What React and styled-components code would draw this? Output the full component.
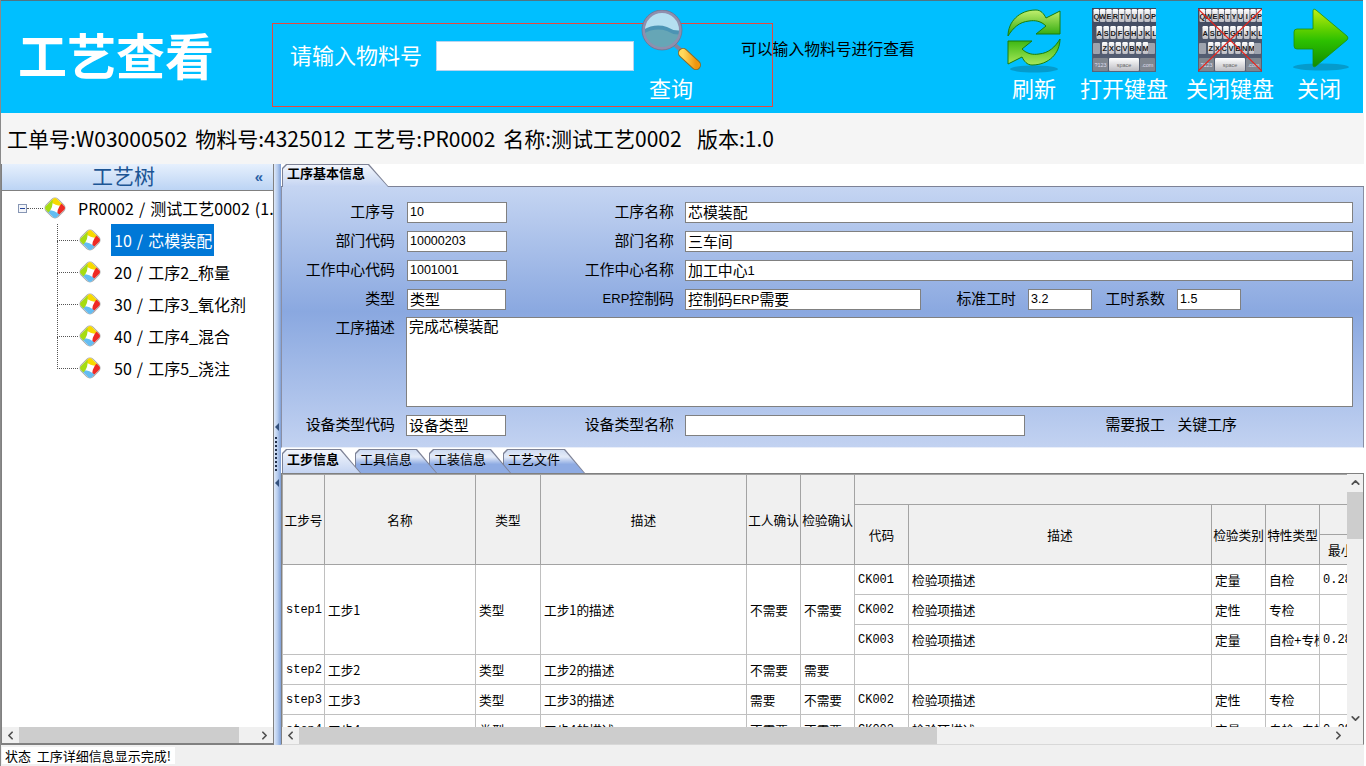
import React from "react";
import styled, { createGlobalStyle } from "styled-components";
import { ChevronLeft, ChevronRight, ChevronUp, ChevronDown } from "lucide-react";

const Global = createGlobalStyle`
  html, body { margin: 0; padding: 0; background: #fff; }
  body { font-family: "Noto Sans CJK SC", "Liberation Sans", sans-serif; color: #000; }
  * { box-sizing: border-box; }
`;

const CJK = `"Noto Sans CJK SC", "Liberation Sans", sans-serif`;
const MIXED = `"Liberation Sans", "Noto Sans CJK SC", sans-serif`;
const MONO = `"Liberation Mono", "Noto Sans CJK SC", monospace`;

// Styling Start
const Page = styled.div`
  width: 1366px;
  height: 766px;
  overflow: hidden;
  display: flex;
  flex-direction: column;
  padding-right: 2px;
  border-left: 1px solid #8a8a8a;
`;

const Header = styled.header`
  position: relative;
  flex: 0 0 113px;
  display: flex;
  align-items: flex-start;
  background: #00bfff;
  border-top: 1px solid #4f7484;
  margin-right: 1px;
`;

const AppTitle = styled.h1`
  width: 271px;
  height: 105px;
  margin: 0;
  padding-left: 17px;
  display: flex;
  align-items: center;
  font: 700 49px/1 ${CJK};
  color: #fff;
`;

const SearchBox = styled.div`
  position: relative;
  width: 501px;
  height: 84px;
  margin-top: 22px;
  padding: 17px 0 0 17px;
  display: flex;
  align-items: flex-start;
  gap: 14px;
  border: 1px solid #e8483f;
`;

const SearchLabel = styled.span`
  margin-top: -2px;
  font: 400 22px/30px ${CJK};
  color: #fff;
`;

const SearchInput = styled.div`
  width: 198px;
  height: 30px;
  background: #fff;
  border: 1px solid #b8d4f0;
`;

const QueryButton = styled.div`
  position: absolute;
  left: 368px;
  top: -14px;
  display: flex;
  flex-direction: column;
  align-items: center;
  width: 60px;
`;

const ButtonText = styled.span`
  margin-top: ${(p) => p.$mt || 0}px;
  font: 400 22px/30px ${CJK};
  color: #fff;
  white-space: nowrap;
`;

const Hint = styled.span`
  position: absolute;
  left: 468px;
  top: 13px;
  font: 400 15.8px/24px ${CJK};
  white-space: nowrap;
`;

const Tools = styled.div`
  margin-left: auto;
  margin-right: 22px;
  margin-top: 7px;
  display: flex;
`;

const Tool = styled.div`
  display: flex;
  flex-direction: column;
  align-items: center;
  margin-left: ${(p) => p.$ml || 0}px;
`;

const ToolIcon = styled.div`
  width: 0;
  height: 64px;
  display: flex;
  justify-content: center;
  align-items: flex-start;
`;

const InfoBar = styled.div`
  flex: 0 0 51px;
  display: flex;
  align-items: center;
  padding-left: 6px;
  background: #f5f5f5;
  font: 400 21px/1 ${CJK};
  word-spacing: 3px;
  white-space: pre;
`;

const Main = styled.div`
  flex: 0 0 581px;
  display: flex;
  min-height: 0;
`;

const LeftPanel = styled.aside`
  width: 273px;
  display: flex;
  flex-direction: column;
  border: 1px solid #808080;
  border-top: 0;
  border-bottom-width: 2px;
  background: #fff;
`;

const PanelTitle = styled.div`
  position: relative;
  flex: 0 0 27px;
  display: flex;
  align-items: center;
  justify-content: center;
  padding: 0 28px 4px 0;
  background: linear-gradient(#e6f0fd, #bcd4f4);
  border-bottom: 1px solid #808080;
  color: #1c5594;
  font: 400 21px/1 ${CJK};
`;

const Collapse = styled.span`
  position: absolute;
  right: 10px;
  top: 3px;
  font: 700 15px/20px ${MIXED};
  color: #2a5fa5;
`;

const Tree = styled.div`
  flex: 1;
  min-height: 0;
  padding-top: 1px;
  overflow: hidden;
  font: 400 16px/1 ${CJK};
  word-spacing: 1.5px;
`;

const RootRow = styled.div`
  height: 32px;
  display: flex;
  align-items: center;
  padding-left: 16px;
  white-space: nowrap;
`;

const Toggle = styled.span`
  flex: none;
  width: 9px;
  height: 9px;
  display: flex;
  align-items: center;
  justify-content: center;
  border: 1px solid #8796b4;
  background: #f4f6fa;
  &::before {
    content: "";
    width: 5px;
    height: 1px;
    background: #24459a;
  }
`;

const HLine = styled.span`
  flex: none;
  width: 16px;
  border-top: 1px dotted #555;
`;

const ChildRow = styled.div`
  height: 32px;
  display: flex;
  align-items: center;
  padding-left: 55px;
  white-space: nowrap;
`;

const Connector = styled.span`
  flex: none;
  width: 21px;
  height: 32px;
  &::before {
    content: "";
    display: block;
    height: 16px;
    border-left: 1px dotted #555;
    border-bottom: 1px dotted #555;
  }
  &::after {
    content: "";
    display: block;
    height: 16px;
    border-left: ${(p) => (p.$last ? "0" : "1px dotted #555")};
  }
`;

const NodeText = styled.span`
  margin-left: ${(p) => p.$ml}px;
  height: 32px;
  padding: 0 2px 0 3px;
  display: flex;
  align-items: center;
  background: ${(p) => (p.$selected ? "#0078d7" : "transparent")};
  color: ${(p) => (p.$selected ? "#fff" : "#000")};
`;

const HBarWrap = styled.div`
  flex: 0 0 ${(p) => p.$h}px;
  display: flex;
  align-items: stretch;
  background: #f0f0f0;
  padding-right: ${(p) => p.$reserve || 0}px;
`;

const BarArrow = styled.span`
  flex: 0 0 ${(p) => p.$size || 17}px;
  display: flex;
  align-items: center;
  justify-content: center;
  color: #505050;
`;

const BarTrack = styled.span`
  flex: 1;
  display: flex;
  flex-direction: ${(p) => (p.$vertical ? "column" : "row")};
`;

const BarThumb = styled.span`
  flex: 0 0 ${(p) => p.$size}px;
  margin-top: ${(p) => (p.$vertical ? p.$offset || 0 : 0)}px;
  margin-left: ${(p) => (p.$vertical ? 0 : p.$offset || 0)}px;
  background: #cdcdcd;
`;

const Splitter = styled.div`
  width: 7px;
  display: flex;
  flex-direction: column;
  align-items: flex-start;
  justify-content: center;
  gap: 6px;
  padding-left: 1px;
  background: linear-gradient(90deg, #dfe9f8, #b6ccee 50%, #7f9fd6);
`;

const Triangle = styled.span`
  width: 0;
  height: 0;
  border: 4px solid transparent;
  border-left: 0;
  border-right: 4px solid #33507c;
`;

const Dots = styled.span`
  width: 2px;
  height: 36px;
  background: repeating-linear-gradient(#1f2f4a 0 2px, transparent 2px 4px);
`;

const RightPanel = styled.section`
  flex: 1;
  min-width: 0;
  display: flex;
  flex-direction: column;
  background: #fff;
`;

const TabStrip = styled.div`
  flex: 0 0 ${(p) => p.$h}px;
  display: flex;
  align-items: flex-end;
  padding-left: 1px;
  background: #fff;
  border-bottom: ${(p) => (p.$border ? "1px solid #7d8296" : "0")};
`;

const TAB_SHAPE = `polygon(0 4px, 4px 0, calc(100% - 20px) 0, 100% 100%, 0 100%)`;

const TabEdge = styled.div`
  position: relative;
  z-index: ${(p) => p.$z};
  flex: none;
  width: ${(p) => p.$w}px;
  height: ${(p) => p.$h}px;
  margin-left: ${(p) => p.$ml || 0}px;
  margin-bottom: ${(p) => (p.$overlap ? -1 : 0)}px;
  padding: 1px 1px 0;
  background: #7d8296;
  clip-path: ${TAB_SHAPE};
`;

const TabFace = styled.div`
  height: 100%;
  display: flex;
  align-items: center;
  padding-left: 4px;
  padding-bottom: ${(p) => p.$lift}px;
  clip-path: ${TAB_SHAPE};
  background: ${(p) =>
    p.$active
      ? "linear-gradient(#f3f6fc, #c4d4f2)"
      : "linear-gradient(#cfdcf2, #e4ebf8 30%, #8eabe3 62%, #8eabe3)"};
  font: ${(p) => (p.$active ? 700 : 400)} 13px/1 ${CJK};
  white-space: nowrap;
`;

const FormPanel = styled.div`
  flex: 0 0 261px;
  display: flex;
  flex-direction: column;
  padding: 15px 10px 0 0;
  gap: 8px;
  background: linear-gradient(#c5d5f2, #8aa8e0 48%, #c2d2f1);
  border-left: 1px solid #8a8fa4;
  border-right: 1px solid #8a8fa4;
  border-bottom: 1px solid #e9eef9;
  font: 400 14.9px/1 ${CJK};
`;

const FormRow = styled.div`
  height: ${(p) => p.$h || 21}px;
  flex: none;
  display: flex;
  margin-top: ${(p) => p.$mt || 0}px;
`;

const Label = styled.label`
  flex: none;
  width: ${(p) => p.$w}px;
  margin-right: ${(p) => p.$mr}px;
  display: flex;
  align-items: ${(p) => (p.$top ? "flex-start" : "center")};
  justify-content: flex-end;
  padding: ${(p) => (p.$top ? "3px 0 0" : "0 0 2px")};
  white-space: nowrap;
`;

const Field = styled.div`
  flex: ${(p) => (p.$w ? "none" : "1")};
  width: ${(p) => (p.$w ? `${p.$w}px` : "auto")};
  display: flex;
  align-items: ${(p) => (p.$top ? "flex-start" : "center")};
  padding: ${(p) => (p.$top ? "1px 2px" : "0 2px 1px")};
  background: #fff;
  border: 1px solid #808080;
  font-size: ${(p) => (p.$num ? "12.5px" : "14.9px")};
  font-family: ${(p) => (p.$num ? MIXED : CJK)};
  white-space: nowrap;
`;

const Latin = styled.span`
  font: 400 13px/1 ${MIXED};
`;

const TableFrame = styled.div`
  flex: 1;
  min-height: 0;
  display: flex;
  flex-direction: column;
  border: 1px solid #808080;
  border-bottom: 1px solid #d8d8d8;
`;

const TableBody = styled.div`
  flex: 1;
  min-height: 0;
  display: flex;
`;

const Viewport = styled.div`
  flex: 1;
  min-width: 0;
  overflow: hidden;
`;

const VBar = styled.div`
  flex: 0 0 16px;
  display: flex;
  flex-direction: column;
  background: #f0f0f0;
`;

const Grid = styled.table`
  table-layout: fixed;
  width: 1092px;
  border-collapse: collapse;
  font: 400 12.7px/1 ${CJK};
`;

const Th = styled.th`
  height: 30px;
  padding: 1px 0 0;
  background: #f0f0f0;
  border: 1px solid #a3a3a3;
  font-weight: 400;
  text-align: center;
  overflow: hidden;
  white-space: nowrap;
`;

const Td = styled.td`
  height: 30px;
  padding: 1px 3px 0;
  border: 1px solid #c0c0c0;
  font-family: ${(p) => (p.$mono ? MONO : CJK)};
  font-size: ${(p) => (p.$mono ? "12px" : "12.7px")};
  overflow: hidden;
  white-space: nowrap;
`;

const StatusBar = styled.div`
  flex: 1;
  display: flex;
  align-items: flex-start;
  padding: 2px 0 0 1px;
  background: #f0f0f0;
`;

const StatusText = styled.span`
  height: 17px;
  padding: 0 4px 1px 3px;
  display: flex;
  align-items: center;
  background: #fff;
  font: 400 13px/1 ${CJK};
  white-space: pre;
`;

// Icons
const TreeIcon = () => (
  <svg width="24" height="24" viewBox="0 0 24 24" style={{ flex: "none" }}>
    <rect x="3.6" y="3.6" width="16.8" height="16.8" rx="4.5" transform="rotate(45 12 12)" fill="#fff" stroke="#a9a9a9" />
    {[
      ["#f7d900", 0],
      ["#ee2a24", 90],
      ["#63bdf2", 180],
      ["#a6dc12", 270],
    ].map(([color, angle]) => (
      <path key={angle} d="M7.5 5.5 L10 3 Q12 1 14 3 L20.6 9.6 Q13 10.5 7.5 5.5Z" fill={color} transform={`rotate(${angle} 12 12)`} />
    ))}
  </svg>
);

const Magnifier = () => (
  <svg width="60" height="60" viewBox="0 0 60 60" style={{ flex: "none" }}>
    <defs>
      <linearGradient id="handle" x1="0" y1="0" x2="1" y2="0">
        <stop offset="0" stopColor="#ffd95c" />
        <stop offset="1" stopColor="#ef960f" />
      </linearGradient>
      <clipPath id="lens">
        <circle cx="21" cy="20" r="18.5" />
      </clipPath>
    </defs>
    <line x1="34" y1="35" x2="42" y2="42" stroke="#85859d" strokeWidth="4" />
    <line x1="42" y1="43" x2="55" y2="55" stroke="#8a6a28" strokeWidth="10" strokeLinecap="round" />
    <line x1="42" y1="43" x2="55" y2="55" stroke="url(#handle)" strokeWidth="8" strokeLinecap="round" />
    <g clipPath="url(#lens)">
      <rect x="0" y="0" width="42" height="42" fill="#66a6b6" />
      <path d="M0 0 H42 V22 Q34 25 26 19 Q14 15 0 24Z" fill="#b5dff0" />
      <path d="M2 20 Q14 13 26 17 Q34 22 42 20 V24 Q34 26 26 21 Q14 17 2 24Z" fill="#4c94b4" />
    </g>
    <circle cx="21" cy="20" r="18.5" fill="none" stroke="#8f8fae" strokeWidth="3" />
    <circle cx="21" cy="20" r="20" fill="none" stroke="#6f6f88" strokeWidth="0.7" />
  </svg>
);

const Shadow = ({ cy, rx }) => <ellipse cx="30" cy={cy} rx={rx} ry="3.5" fill="#0a6f8e" opacity="0.45" />;

const RefreshIcon = () => (
  <svg width="60" height="66" viewBox="0 0 60 66" style={{ flex: "none" }}>
    <defs>
      <linearGradient id="refreshTop" x1="0" y1="0" x2="0" y2="1">
        <stop offset="0" stopColor="#c2ef6e" />
        <stop offset="1" stopColor="#2ba80b" />
      </linearGradient>
      <linearGradient id="refreshLow" x1="0" y1="1" x2="0" y2="0">
        <stop offset="0" stopColor="#35b40f" />
        <stop offset="1" stopColor="#a9e85a" />
      </linearGradient>
    </defs>
    <Shadow cy="61" rx="24" />
    <path d="M4 28 C4 14 15 2 32 2 C37 2 40 6 42 10 L56 3 L56 26 L32 26 L42 18 C37 13 31 12 25 13 C15 14 9 20 4 28Z" fill="url(#refreshTop)" stroke="#1b7d0c" />
    <path d="M4 28 C4 14 15 2 32 2 C37 2 40 6 42 10 L56 3 L56 26 L32 26 L42 18 C37 13 31 12 25 13 C15 14 9 20 4 28Z" fill="url(#refreshLow)" stroke="#1b7d0c" transform="rotate(180 30 29.5)" />
  </svg>
);

const ROWS = [
  { y: 1, h: 13, w: 5.6, step: 6.35, x: 1.5, keys: "QWERTYUIOP" },
  { y: 18, h: 13, w: 5.6, step: 6.9, x: 4.5, keys: "ASDFGHJKL" },
  { y: 34, h: 12, w: 5.4, step: 6.8, x: 10, keys: "ZXCVBNM" },
];

const KeyboardIcon = ({ crossed, id }) => (
  <svg width="64" height="64" viewBox="0 0 64 64" style={{ flex: "none" }}>
    <defs>
      <linearGradient id={`kbd${id}`} x1="0" y1="0" x2="0" y2="1">
        <stop offset="0" stopColor="#3d465c" />
        <stop offset="1" stopColor="#5a6478" />
      </linearGradient>
      <linearGradient id={`key${id}`} x1="0" y1="0" x2="0" y2="1">
        <stop offset="0" stopColor="#ffffff" />
        <stop offset="1" stopColor="#bcbcc2" />
      </linearGradient>
    </defs>
    <rect width="64" height="64" fill={`url(#kbd${id})`} />
    {ROWS.map((row) =>
      row.keys.split("").map((k, i) => (
        <g key={k}>
          <rect x={row.x + i * row.step} y={row.y} width={row.w} height={row.h} rx="1.2" fill={`url(#key${id})`} />
          <text x={row.x + i * row.step + row.w / 2} y={row.y + row.h - 3.5} fontSize="7.5" fontWeight="700" textAnchor="middle" fill="#1a1a1a" fontFamily="Liberation Sans">{k}</text>
        </g>
      ))
    )}
    <rect x="1" y="35" width="7" height="11" rx="1" fill="#9ea3ae" />
    <rect x="56" y="35" width="7" height="11" rx="1" fill="#9ea3ae" />
    <rect x="1" y="50" width="15" height="13" rx="1" fill="#80868f" />
    <text x="8.5" y="59" fontSize="5.5" textAnchor="middle" fill="#dde" fontFamily="Liberation Sans">?123</text>
    <rect x="17" y="50" width="30" height="13" rx="1" fill={`url(#key${id})`} />
    <text x="32" y="59" fontSize="5.5" textAnchor="middle" fill="#666" fontFamily="Liberation Sans">space</text>
    <rect x="48" y="50" width="15" height="13" rx="1" fill="#80868f" />
    <text x="55.5" y="59" fontSize="5.5" textAnchor="middle" fill="#dde" fontFamily="Liberation Sans">.com</text>
    {crossed && (
      <g stroke="#e8221a" strokeWidth="1.2">
        <line x1="0" y1="1" x2="64" y2="63" />
        <line x1="64" y1="1" x2="0" y2="63" />
      </g>
    )}
  </svg>
);

const CloseIcon = () => (
  <svg width="60" height="66" viewBox="-2 1 60 66" style={{ flex: "none" }}>
    <defs>
      <linearGradient id="arrow" x1="0" y1="0" x2="0" y2="1">
        <stop offset="0" stopColor="#c4ee10" />
        <stop offset="0.35" stopColor="#5fd000" />
        <stop offset="0.55" stopColor="#2cc000" />
        <stop offset="1" stopColor="#128c00" />
      </linearGradient>
    </defs>
    <Shadow cy="60" rx="28" />
    <path d="M3 25 Q3 22 6 22 L22 22 L22 4 Q22 1 25 3 L56 29 Q58 31 56 33 L25 59 Q22 61 22 58 L22 42 L6 42 Q3 42 3 39Z" fill="url(#arrow)" stroke="#1d8f06" strokeWidth="0.8" />
  </svg>
);

const HScroll = ({ thumb, offset, reserve, trailing = 17, height = 17 }) => (
  <HBarWrap $reserve={reserve} $h={height}>
    <BarArrow><ChevronLeft size={13} strokeWidth={3.2} /></BarArrow>
    <BarTrack>
      <BarThumb $size={thumb} $offset={offset} />
    </BarTrack>
    <BarArrow $size={trailing}><ChevronRight size={13} strokeWidth={3.2} /></BarArrow>
  </HBarWrap>
);

const widths = [42, 151, 65, 206, 54, 54, 54, 303, 54, 54, 55];

const rows = [
  { code: "CK002", kind: "定性", trait: "专检", step: "step2", name: "工步2", desc: "工步2的描述", worker: "不需要", check: "需要", empty: true },
  { code: "CK002", kind: "定性", trait: "专检", step: "step3", name: "工步3", desc: "工步3的描述", worker: "需要", check: "不需要" },
  { code: "CK003", kind: "定量", trait: "自检+专检", min: "0.28", step: "step4", name: "工步4", desc: "工步4的描述", worker: "不需要", check: "不需要" },
];

const treeNodes = ["10 / 芯模装配", "20 / 工序2_称量", "30 / 工序3_氧化剂", "40 / 工序4_混合", "50 / 工序5_浇注"];

const App = () => {
  return (
    <Page>
      <Global />
      <Header>
        <AppTitle>工艺查看</AppTitle>
        <SearchBox>
          <SearchLabel>请输入物料号</SearchLabel>
          <SearchInput />
          <QueryButton>
            <Magnifier />
            <ButtonText $mt={2}>查询</ButtonText>
          </QueryButton>
          <Hint>可以输入物料号进行查看</Hint>
        </SearchBox>
        <Tools>
          <Tool>
            <ToolIcon><RefreshIcon /></ToolIcon>
            <ButtonText>刷新</ButtonText>
          </Tool>
          <Tool $ml={24}>
            <ToolIcon><KeyboardIcon id="a" /></ToolIcon>
            <ButtonText>打开键盘</ButtonText>
          </Tool>
          <Tool $ml={18}>
            <ToolIcon><KeyboardIcon id="b" crossed /></ToolIcon>
            <ButtonText>关闭键盘</ButtonText>
          </Tool>
          <Tool $ml={23}>
            <ToolIcon><CloseIcon /></ToolIcon>
            <ButtonText>关闭</ButtonText>
          </Tool>
        </Tools>
      </Header>

      <InfoBar>工单号:W03000502 物料号:4325012 工艺号:PR0002 名称:测试工艺0002  版本:1.0</InfoBar>

      <Main>
        <LeftPanel>
          <PanelTitle>
            工艺树
            <Collapse>«</Collapse>
          </PanelTitle>
          <Tree>
            <RootRow>
              <Toggle />
              <HLine />
              <TreeIcon />
              <NodeText $ml={8}>PR0002 / 测试工艺0002 (1.0)</NodeText>
            </RootRow>
            {treeNodes.map((node, i) => (
              <ChildRow key={node}>
                <Connector $last={i === treeNodes.length - 1} />
                <TreeIcon />
                <NodeText $ml={9} $selected={i === 0}>{node}</NodeText>
              </ChildRow>
            ))}
          </Tree>
          <HScroll thumb={220} offset={0} trailing={18} height={16} />
        </LeftPanel>

        <Splitter>
          <Triangle />
          <Dots />
          <Triangle />
        </Splitter>

        <RightPanel>
          <TabStrip $h={23} $border>
            <TabEdge $w={107} $h={23} $z={3} $overlap>
              <TabFace $active $lift={7}>工序基本信息</TabFace>
            </TabEdge>
          </TabStrip>

          <FormPanel>
            <FormRow>
              <Label $w={113} $mr={12}>工序号</Label>
              <Field $w={100} $num>10</Field>
              <Label $w={167} $mr={11}>工序名称</Label>
              <Field>芯模装配</Field>
            </FormRow>
            <FormRow>
              <Label $w={113} $mr={12}>部门代码</Label>
              <Field $w={100} $num>10000203</Field>
              <Label $w={167} $mr={11}>部门名称</Label>
              <Field>三车间</Field>
            </FormRow>
            <FormRow>
              <Label $w={113} $mr={12}>工作中心代码</Label>
              <Field $w={100} $num>1001001</Field>
              <Label $w={167} $mr={11}>工作中心名称</Label>
              <Field>加工中心<Latin>1</Latin></Field>
            </FormRow>
            <FormRow>
              <Label $w={113} $mr={12}>类型</Label>
              <Field $w={99}>类型</Field>
              <Label $w={168} $mr={11}><Latin>ERP</Latin>控制码</Label>
              <Field $w={236}>控制码<Latin>ERP</Latin>需要</Field>
              <Label $w={95} $mr={12}>标准工时</Label>
              <Field $w={64} $num>3.2</Field>
              <Label $w={73} $mr={12}>工时系数</Label>
              <Field $w={64} $num>1.5</Field>
            </FormRow>
            <FormRow $h={90} $mt={-1}>
              <Label $w={113} $mr={11} $top>工序描述</Label>
              <Field $top>完成芯模装配</Field>
            </FormRow>
            <FormRow>
              <Label $w={113} $mr={11}>设备类型代码</Label>
              <Field $w={100}>设备类型</Field>
              <Label $w={168} $mr={11}>设备类型名称</Label>
              <Field $w={340} />
              <Label $w={140} $mr={12}>需要报工</Label>
              <Label $w={60} $mr={0}>关键工序</Label>
            </FormRow>
          </FormPanel>

          <TabStrip $h={25}>
            <TabEdge $w={79} $h={24} $z={5}>
              <TabFace $active $lift={6}>工步信息</TabFace>
            </TabEdge>
            {["工具信息", "工装信息", "工艺文件"].map((name, i) => (
              <TabEdge key={name} $w={82} $h={24} $z={4 - i} $ml={i === 0 ? -6 : -8}>
                <TabFace $lift={6}>{name}</TabFace>
              </TabEdge>
            ))}
          </TabStrip>

          <TableFrame>
            <TableBody>
              <Viewport>
                <Grid>
                  <colgroup>
                    {widths.map((w, i) => <col key={i} style={{ width: w }} />)}
                  </colgroup>
                  <thead>
                    <tr>
                      <Th rowSpan={3}>工步号</Th>
                      <Th rowSpan={3}>名称</Th>
                      <Th rowSpan={3}>类型</Th>
                      <Th rowSpan={3}>描述</Th>
                      <Th rowSpan={3}>工人确认</Th>
                      <Th rowSpan={3}>检验确认</Th>
                      <Th colSpan={5} />
                    </tr>
                    <tr>
                      <Th rowSpan={2}>代码</Th>
                      <Th rowSpan={2}>描述</Th>
                      <Th rowSpan={2}>检验类别</Th>
                      <Th rowSpan={2}>特性类型</Th>
                      <Th />
                    </tr>
                    <tr>
                      <Th>最小值</Th>
                    </tr>
                  </thead>
                  <tbody>
                    <tr>
                      <Td $mono rowSpan={3}>step1</Td>
                      <Td rowSpan={3}>工步1</Td>
                      <Td rowSpan={3}>类型</Td>
                      <Td rowSpan={3}>工步1的描述</Td>
                      <Td rowSpan={3}>不需要</Td>
                      <Td rowSpan={3}>不需要</Td>
                      <Td $mono>CK001</Td>
                      <Td>检验项描述</Td>
                      <Td>定量</Td>
                      <Td>自检</Td>
                      <Td $mono>0.28</Td>
                    </tr>
                    <tr>
                      <Td $mono>CK002</Td>
                      <Td>检验项描述</Td>
                      <Td>定性</Td>
                      <Td>专检</Td>
                      <Td />
                    </tr>
                    <tr>
                      <Td $mono>CK003</Td>
                      <Td>检验项描述</Td>
                      <Td>定量</Td>
                      <Td>自检+专检</Td>
                      <Td $mono>0.28</Td>
                    </tr>
                    {rows.map((r) => (
                      <tr key={r.step}>
                        <Td $mono>{r.step}</Td>
                        <Td>{r.name}</Td>
                        <Td>类型</Td>
                        <Td>{r.desc}</Td>
                        <Td>{r.worker}</Td>
                        <Td>{r.check}</Td>
                        <Td $mono>{r.empty ? "" : r.code}</Td>
                        <Td>{r.empty ? "" : "检验项描述"}</Td>
                        <Td>{r.empty ? "" : r.kind}</Td>
                        <Td>{r.empty ? "" : r.trait}</Td>
                        <Td $mono>{r.min}</Td>
                      </tr>
                    ))}
                  </tbody>
                </Grid>
              </Viewport>
              <VBar>
                <BarArrow><ChevronUp size={13} strokeWidth={3.2} /></BarArrow>
                <BarTrack $vertical>
                  <BarThumb $vertical $size={47} $offset={1} />
                </BarTrack>
                <BarArrow><ChevronDown size={13} strokeWidth={3.2} /></BarArrow>
              </VBar>
            </TableBody>
            <HScroll thumb={638} offset={0} reserve={16} />
          </TableFrame>
        </RightPanel>
      </Main>

      <StatusBar>
        <StatusText>状态  工序详细信息显示完成!</StatusText>
      </StatusBar>
    </Page>
  );
};

export default App;
